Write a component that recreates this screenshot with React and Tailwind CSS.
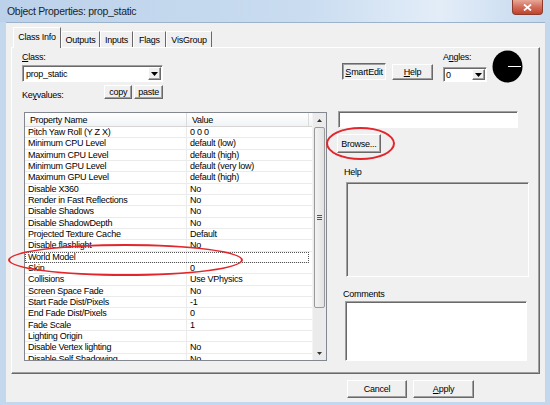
const rows = [
    ["Pitch Yaw Roll (Y Z X)", "0 0 0"],
    ["Minimum CPU Level", "default (low)"],
    ["Maximum CPU Level", "default (high)"],
    ["Minimum GPU Level", "default (very low)"],
    ["Maximum GPU Level", "default (high)"],
    ["Disable X360", "No"],
    ["Render in Fast Reflections", "No"],
    ["Disable Shadows", "No"],
    ["Disable ShadowDepth", "No"],
    ["Projected Texture Cache", "Default"],
    ["Disable flashlight", "No"],
    ["World Model", ""],
    ["Skin", "0"],
    ["Collisions", "Use VPhysics"],
    ["Screen Space Fade", "No"],
    ["Start Fade Dist/Pixels", "-1"],
    ["End Fade Dist/Pixels", "0"],
    ["Fade Scale", "1"],
    ["Lighting Origin", ""],
    ["Disable Vertex lighting", "No"],
    ["Disable Self Shadowing", "No"],
];

const tabs = [
    ["Outputs", "w-[39px]"],
    ["Inputs", "w-[33px]"],
    ["Flags", "w-[33px]"],
    ["VisGroup", "w-[46px]"],
];

const raised = "bg-[#f0f0f0] border border-t-white border-l-white border-r-[#696969] border-b-[#696969] shadow-[inset_-1px_-1px_0_#a0a0a0]";
const sunken = "border border-t-[#a0a0a0] border-l-[#a0a0a0] border-r-white border-b-white shadow-[inset_1px_1px_0_#696969]";

function DropArrow() {
    return (
        <div className={"w-[13px] h-full flex items-center justify-center " + raised}>
            <svg width="7" height="4" viewBox="0 0 7 4"><path d="M0 0h7L3.5 4z" fill="#000" /></svg>
        </div>
    );
}

function Ellipse({ className }) {
    return <div className={"absolute border-2 border-[#e3262b] rounded-[50%] pointer-events-none " + className}></div>;
}

export default function App() {
    return (
        <div className="relative w-[550px] h-[405px] overflow-hidden flex flex-col bg-[#c3d7ed] font-['Liberation_Sans',Arial,sans-serif] text-black text-[9px] tracking-[-0.25px] leading-[12px]">
            {/* title bar */}
            <div className="h-[22px] flex items-start bg-[linear-gradient(90deg,#bcd2ea_0%,#c9dcf0_55%,#e3edf8_80%,#c4d8ee_100%)]">
                <span className="pl-[7px] pt-[5px] text-[10.5px] tracking-[-0.3px] leading-[13px] text-[#1e1e1e]">Object Properties: prop_static</span>
                <div className="ml-auto mr-[7px] w-[31px] h-[15px] rounded-b-[4px] border border-t-0 border-[#8c3a2c] bg-[linear-gradient(180deg,#e8a798_0%,#d26d5a_50%,#c2412c_100%)] flex items-center justify-center">
                    <svg width="9" height="7" viewBox="0 0 9 7">
                        <path d="M1 0.5L8 6.5M8 0.5L1 6.5" stroke="#fff" strokeWidth="1.8" />
                    </svg>
                </div>
            </div>

            {/* client area */}
            <div className="ml-[6px] mr-[5px] h-[380px] bg-[#f0f0f0] border-t border-[#9db3cc] flex flex-col pl-[5px] pr-[5px]">
                <div className="flex items-end pt-[4px] pl-[2px]">
                    <div className="relative z-10 w-[48px] h-[21px] -mb-px bg-[#f0f0f0] border-t border-l border-white border-r border-r-[#696969] flex items-start justify-center pt-[3px]">
                        Class Info
                    </div>
                    {tabs.map(([label, w]) => (
                        <div key={label} className={w + " h-[16px] border-t border-l border-white border-r border-r-[#696969] flex items-center justify-center"}>
                            {label}
                        </div>
                    ))}
                </div>

                <div className="w-[529px] h-[327px] border border-t-white border-l-white border-r-[#696969] border-b-[#696969] shadow-[inset_-1px_-1px_0_#a0a0a0] pl-[10px] pt-[3px] flex flex-col">
                    {/* top section */}
                    <div className="flex">
                        <div className="w-[141px] flex flex-col">
                            <span><u>C</u>lass:</span>
                            <div className={"mt-[2px] h-[17px] bg-white flex items-center pl-[3px] " + sunken}>
                                <span className="flex-1">prop_static</span>
                                <div className="h-[13px] mr-px"><DropArrow /></div>
                            </div>
                            <div className="mt-[3px] flex items-end h-[14px]">
                                <span className="w-[83px] -mb-[2px]">Ke<u>y</u>values:</span>
                                <div className={"w-[28px] h-[14px] flex items-center justify-center " + raised}>copy</div>
                                <div className={"ml-[2px] w-[29px] h-[14px] flex items-center justify-center " + raised}>paste</div>
                            </div>
                        </div>

                        <div className="ml-[179px] mt-[12px] w-[44px] h-[17px] flex items-center justify-center border border-t-[#696969] border-l-[#696969] border-r-white border-b-white shadow-[inset_1px_1px_0_#a0a0a0]">
                            <span><u>S</u>martEdit</span>
                        </div>
                        <div className={"ml-[6px] mt-[13px] w-[41px] h-[16px] flex items-center justify-center " + raised}>
                            <span><u>H</u>elp</span>
                        </div>
                        <div className="ml-[10px] flex flex-col">
                            <span>A<u>n</u>gles:</span>
                            <div className={"mt-[4px] w-[44px] h-[15px] bg-white flex items-center pl-[2px] " + sunken}>
                                <span className="flex-1">0</span>
                                <div className="h-[11px] mr-px"><DropArrow /></div>
                            </div>
                        </div>
                        <svg className="ml-[5px] -mt-[1px]" width="31" height="33" viewBox="0 0 31 33">
                            <ellipse cx="15.5" cy="16.5" rx="15" ry="16" fill="#000" />
                            <line x1="16" y1="16.5" x2="29" y2="16.5" stroke="#fff" strokeWidth="1" />
                        </svg>
                    </div>

                    {/* body */}
                    <div className="mt-[13px] flex items-start">
                        <div className="ml-[2px] w-[303px] h-[249px] border border-[#828790] bg-white flex overflow-hidden">
                            <div className="w-[287px] flex flex-col overflow-hidden">
                                <div className="h-[14px] shrink-0 flex border-b border-[#d5d5d5] bg-[linear-gradient(180deg,#ffffff_0%,#f7f8fa_60%,#f1f2f4_100%)]">
                                    <div className="w-[162px] border-r border-[#dcdcdc] pl-[5px] flex items-center">Property Name</div>
                                    <div className="w-[122px] border-r border-[#dcdcdc] pl-[5px] flex items-center">Value</div>
                                </div>
                                {rows.map(([name, value], i) => (
                                    <div key={name} className={"h-[11.33px] shrink-0 flex leading-[11px] " + (i === 11 ? "outline-1 outline-dotted outline-offset-[-1px] outline-[#555] w-[284px]" : "")}>
                                        <div className="w-[162px] pl-[3px] border-b border-r border-[#ebebeb] whitespace-nowrap">{name}</div>
                                        <div className="flex-1 pl-[3px] border-b border-[#ebebeb] whitespace-nowrap">{value}</div>
                                    </div>
                                ))}
                            </div>
                            {/* scrollbar */}
                            <div className="w-[14px] flex flex-col bg-[#ebebeb] border-l border-[#f4f4f4]">
                                <div className="h-[14px] flex items-center justify-center">
                                    <svg width="5" height="3" viewBox="0 0 5 3"><path d="M0 3h5L2.5 0z" fill="#333" /></svg>
                                </div>
                                <div className="h-[181px] mx-[1px] rounded-[2px] border border-[#9a9a9a] bg-[linear-gradient(90deg,#f3f3f3,#e2e2e2)] flex items-center justify-center">
                                    <div className="flex flex-col gap-[1px]">
                                        <div className="w-[5px] h-px bg-[#555]"></div>
                                        <div className="w-[5px] h-px bg-[#555]"></div>
                                        <div className="w-[5px] h-px bg-[#555]"></div>
                                    </div>
                                </div>
                                <div className="flex-1"></div>
                                <div className="h-[14px] flex items-center justify-center">
                                    <svg width="5" height="3" viewBox="0 0 5 3"><path d="M0 0h5L2.5 3z" fill="#333" /></svg>
                                </div>
                            </div>
                        </div>

                        <div className="ml-[10px] -mt-px flex flex-col">
                            <div className={"ml-[1px] w-[180px] h-[17px] bg-white " + sunken}></div>
                            <div className={"mt-[6px] w-[44px] h-[19px] flex items-center justify-center " + raised}>Browse...</div>
                            <span className="ml-[7px] mt-[13px]">Help</span>
                            <div className="ml-[9px] mt-[4px] w-[183px] h-[95px] bg-[#f0f0f0] border border-t-[#a0a0a0] border-l-[#a0a0a0] border-r-white border-b-white shadow-[inset_1px_1px_0_#696969]"></div>
                            <span className="ml-[6px] mt-[11px]">Comments</span>
                            <div className={"ml-[8px] mt-[1px] w-[182px] h-[60px] bg-white " + sunken}></div>
                        </div>
                    </div>
                </div>

                <div className="mt-[6px] flex justify-end pr-[66px] gap-[6px]">
                    <div className={"w-[60px] h-[18px] flex items-center justify-center " + raised}>Cancel</div>
                    <div className={"w-[61px] h-[18px] flex items-center justify-center " + raised}><span><u>A</u>pply</span></div>
                </div>
            </div>

            <Ellipse className="left-[8px] top-[244px] w-[235px] h-[32px]" />
            <Ellipse className="left-[326px] top-[127px] w-[69px] h-[33px]" />
        </div>
    );
}
